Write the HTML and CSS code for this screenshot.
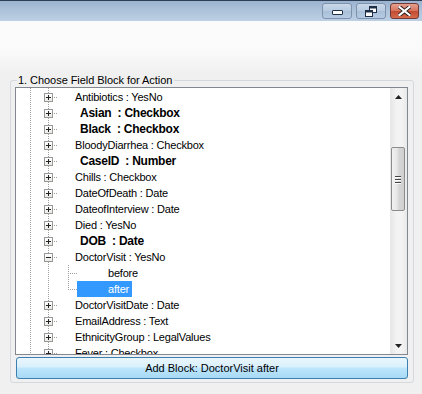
FILE: index.html
```html
<!DOCTYPE html>
<html>
<head>
<meta charset="utf-8">
<link rel="stylesheet" href="styles.css">
</head>
<body>
<div class="window">
  <div class="titlebar">
    <div class="tb-btn min"><span class="min-glyph"></span></div>
    <div class="tb-btn restore">
      <svg width="12" height="11" viewBox="0 0 12 11"><rect x="4.5" y="0.5" width="7" height="6" fill="#fff" stroke="#1e2f45"/><rect x="4.5" y="0.5" width="7" height="2" fill="#1e2f45"/><rect x="0.5" y="4.5" width="7" height="6" fill="#fff" stroke="#1e2f45"/><rect x="0.5" y="4.5" width="7" height="2" fill="#1e2f45"/></svg>
    </div>
    <div class="tb-btn close">
      <svg width="13" height="10" viewBox="0 0 13 10"><path d="M1.5 1 L11.5 9 M11.5 1 L1.5 9" stroke="#2a1a1a" stroke-width="4" stroke-linecap="square"/><path d="M1.5 1 L11.5 9 M11.5 1 L1.5 9" stroke="#fff" stroke-width="2.2" stroke-linecap="square"/></svg>
    </div>
  </div>
  <div class="toparea"></div>
  <fieldset class="group">
    <legend>1. Choose Field Block for Action</legend>
    <div class="tree">
      <div class="rows">
        <div class="row"><span class="exp plus"></span><span class="hdots"></span><span class="label">Antibiotics : YesNo</span></div>
        <div class="row"><span class="exp plus"></span><span class="hdots"></span><span class="label bold">Asian&nbsp; : Checkbox</span></div>
        <div class="row"><span class="exp plus"></span><span class="hdots"></span><span class="label bold">Black&nbsp; : Checkbox</span></div>
        <div class="row"><span class="exp plus"></span><span class="hdots"></span><span class="label">BloodyDiarrhea : Checkbox</span></div>
        <div class="row"><span class="exp plus"></span><span class="hdots"></span><span class="label bold">CaseID&nbsp; : Number</span></div>
        <div class="row"><span class="exp plus"></span><span class="hdots"></span><span class="label">Chills : Checkbox</span></div>
        <div class="row"><span class="exp plus"></span><span class="hdots"></span><span class="label">DateOfDeath : Date</span></div>
        <div class="row"><span class="exp plus"></span><span class="hdots"></span><span class="label">DateofInterview : Date</span></div>
        <div class="row"><span class="exp plus"></span><span class="hdots"></span><span class="label">Died : YesNo</span></div>
        <div class="row"><span class="exp plus"></span><span class="hdots"></span><span class="label bold">DOB&nbsp; : Date</span></div>
        <div class="row"><span class="exp minus"></span><span class="hdots"></span><span class="label">DoctorVisit : YesNo</span></div>
        <div class="row child"><span class="branch"></span><span class="clabel">before</span></div>
        <div class="row child"><span class="branch last"></span><span class="clabel selected">after</span></div>
        <div class="row"><span class="exp plus"></span><span class="hdots"></span><span class="label">DoctorVisitDate : Date</span></div>
        <div class="row"><span class="exp plus"></span><span class="hdots"></span><span class="label">EmailAddress : Text</span></div>
        <div class="row"><span class="exp plus"></span><span class="hdots"></span><span class="label">EthnicityGroup : LegalValues</span></div>
        <div class="row"><span class="exp plus"></span><span class="hdots"></span><span class="label">Fever : Checkbox</span></div>
      </div>
      <div class="scrollbar">
        <div class="sb-arrow up"><svg width="7" height="4" viewBox="0 0 7 4"><path d="M0 4 L3.5 0 L7 4 Z" fill="#222"/></svg></div>
        <div class="sb-track-top"></div>
        <div class="sb-thumb"><span class="grip"></span><span class="grip"></span><span class="grip"></span></div>
        <div class="sb-track"></div>
        <div class="sb-arrow down"><svg width="7" height="4" viewBox="0 0 7 4"><path d="M0 0 L7 0 L3.5 4 Z" fill="#222"/></svg></div>
      </div>
    </div>
    <div class="action-btn">Add Block: DoctorVisit after</div>
  </fieldset>
</div>
</body>
</html>
```
FILE: styles.css
```css
html, body {
  margin: 0;
  padding: 0;
}
body {
  width: 422px;
  height: 394px;
  overflow: hidden;
  background: #f0f0f0;
  font-family: "Liberation Sans", Arial, sans-serif;
  font-size: 11px;
  color: #000;
}
.window {
  display: flex;
  flex-direction: column;
  width: 422px;
  height: 394px;
}
.titlebar {
  height: 21px;
  box-sizing: border-box;
  border-top: 1px solid #2c3f57;
  background: linear-gradient(to bottom, #9bb3cf 0%, #aec3da 50%, #bccfe4 100%);
  display: flex;
  justify-content: flex-end;
  align-items: flex-start;
  padding: 2px 3px 0 0;
  gap: 4px;
}
.tb-btn {
  height: 16px;
  box-sizing: border-box;
  border: 1px solid #7d92ab;
  border-radius: 3px;
  display: flex;
  align-items: center;
  justify-content: center;
}
.tb-btn.min, .tb-btn.restore {
  width: 30px;
  background: linear-gradient(to bottom, #c9d8e9 0%, #b7cae0 50%, #a9bfd8 51%, #b6cbe3 100%);
}
.tb-btn.close {
  width: 29px;
  border-color: #6f3a35;
  background: linear-gradient(to bottom, #e6a08f 0%, #d4725d 50%, #c24a30 51%, #d46a4c 100%);
}
.min-glyph {
  width: 11px;
  height: 5px;
  box-sizing: border-box;
  border: 1px solid #1e2f45;
  background: #fff;
  margin-top: 3px;
  border-radius: 1px;
}
.toparea {
  height: 53px;
  background: linear-gradient(to bottom, #fcfbfc 0%, #fbfafb 55%, #f0f0f0 100%);
}
.group {
  margin: 0 8px 0 10px;
  padding: 0 5px 3px 4px;
  border: 1px solid #d5d8dc;
  border-radius: 3px;
  min-width: 0;
  display: flex;
  flex-direction: column;
}
.group legend {
  padding: 0 2px 0 1px;
  margin-left: 2px;
  font-size: 11px;
  line-height: 13px;
  color: #000;
  letter-spacing: -0.05px;
}
.tree {
  height: 268px;
  box-sizing: border-box;
  border: 1px solid #828790;
  background: #fff;
  display: flex;
  overflow: hidden;
}
.rows {
  flex: 1;
  padding-top: 1px;
  background:
    repeating-linear-gradient(to bottom, #a0a0a0 0 1px, transparent 1px 2px) 14px 0 / 1px 100% no-repeat,
    repeating-linear-gradient(to bottom, #a0a0a0 0 1px, transparent 1px 2px) 32px 0 / 1px 100% no-repeat;
}
.row {
  height: 16px;
  display: flex;
  align-items: center;
  padding-left: 28px;
  white-space: nowrap;
}
.exp {
  width: 9px;
  height: 9px;
  box-sizing: border-box;
  border: 1px solid #989898;
  background-color: #fff;
  flex: none;
}
.exp.plus {
  background:
    linear-gradient(#222, #222) 1px 3px / 5px 1px no-repeat,
    linear-gradient(#222, #222) 3px 1px / 1px 5px no-repeat,
    linear-gradient(to bottom, #fff, #eceae6);
}
.exp.minus {
  background:
    linear-gradient(#222, #222) 1px 3px / 5px 1px no-repeat,
    linear-gradient(to bottom, #fff, #eceae6);
}
.hdots {
  width: 5px;
  height: 1px;
  flex: none;
  background: repeating-linear-gradient(to right, transparent 0 1px, #a0a0a0 1px 2px);
}
.label {
  margin-left: 17px;
  font-size: 11px;
  letter-spacing: -0.2px;
}
.label.bold {
  font-weight: bold;
  font-size: 12px;
  margin-left: 22px;
  letter-spacing: -0.25px;
}
.row.child {
  padding-left: 52px;
}
.branch {
  width: 9px;
  height: 16px;
  flex: none;
  background:
    repeating-linear-gradient(to bottom, #a0a0a0 0 1px, transparent 1px 2px) 0 0 / 1px 16px no-repeat,
    repeating-linear-gradient(to right, #a0a0a0 0 1px, transparent 1px 2px) 0 8px / 9px 1px no-repeat;
}
.branch.last {
  background:
    repeating-linear-gradient(to bottom, #a0a0a0 0 1px, transparent 1px 2px) 0 0 / 1px 9px no-repeat,
    repeating-linear-gradient(to right, #a0a0a0 0 1px, transparent 1px 2px) 0 8px / 9px 1px no-repeat;
}
.clabel {
  height: 16px;
  line-height: 16px;
  padding: 0 2px 0 31px;
  letter-spacing: -0.2px;
}
.clabel.selected {
  background: #3399ff;
  color: #fff;
  width: 22px;
}
.scrollbar {
  width: 17px;
  flex: none;
  display: flex;
  flex-direction: column;
  background: linear-gradient(to right, #e6e6e6, #f3f3f3 40%, #f3f3f3 70%, #e8e8e8);
}
.sb-arrow {
  height: 17px;
  display: flex;
  align-items: center;
  justify-content: center;
  flex: none;
}
.sb-track-top {
  height: 42px;
}
.sb-thumb {
  height: 64px;
  margin: 0 2px 0 1px;
  box-sizing: border-box;
  border: 1px solid #8c8c8c;
  border-radius: 2px;
  background: linear-gradient(to right, #f2f2f2 0%, #e4e4e4 45%, #d6d6d6 55%, #cfcfcf 100%);
  display: flex;
  flex-direction: column;
  align-items: center;
  justify-content: center;
  gap: 2px;
  flex: none;
}
.grip {
  width: 6px;
  height: 1px;
  background: #444;
  box-shadow: 0 1px 0 #fff;
}
.sb-track {
  flex: 1;
}
.action-btn {
  margin: 2px 0 0 1px;
  height: 22px;
  box-sizing: border-box;
  border: 1px solid #3c7fb1;
  border-radius: 3px;
  background: linear-gradient(to bottom, #eaf6fd 0%, #d9f0fc 45%, #bee6fd 50%, #a7d9f5 100%);
  display: flex;
  align-items: center;
  justify-content: center;
  font-size: 11px;
}
```
